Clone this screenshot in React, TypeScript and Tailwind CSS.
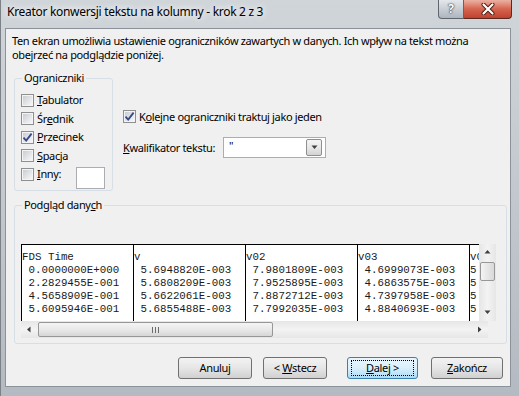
const ui = "font-['Noto_Sans','Liberation_Sans',sans-serif]";

function Check({ on }: { on?: boolean }) {
  return (
    <span className="flex h-[13px] w-[13px] shrink-0 items-center justify-center border border-[#8e8f8f] bg-[#f4f4f4]">
      <span className="flex h-[9px] w-[9px] items-center justify-center overflow-visible bg-linear-to-br from-[#c9cdd3] to-[#f7f7f7]">
        {on && (
          <svg width="11" height="11" viewBox="0 0 11 11" className="shrink-0">
            <path d="M1.5 5.6 L4.2 8.6 L9.6 1.6" fill="none" stroke="#34488a" strokeWidth="1.8" />
          </svg>
        )}
      </span>
    </span>
  );
}

function Tri({ dir }: { dir: "up" | "down" | "left" | "right" }) {
  const d = {
    up: "M0.5 4.5 L3.5 1 L6.5 4.5 Z",
    down: "M0.5 1.5 L3.5 5 L6.5 1.5 Z",
    left: "M4.5 0.5 L1 3.5 L4.5 6.5 Z",
    right: "M2 0.5 L5.5 3.5 L2 6.5 Z",
  }[dir];
  return (
    <svg width="7" height="7" viewBox="0 0 7 7">
      <path d={d} fill="#404040" />
    </svg>
  );
}

function Btn({ children, className, focus }: { children: React.ReactNode; className: string; focus?: boolean }) {
  return (
    <div
      className={
        "flex h-[22px] shrink-0 items-center justify-center rounded-[3px] border " +
        (focus
          ? "border-[#3c7fb1] bg-linear-to-b from-[#eaf6fd] via-[#d9f0fc] to-[#a9dbf6] "
          : "border-[#707070] bg-linear-to-b from-[#f3f3f3] via-[#e6e6e6] to-[#d0d0d0] ") +
        className
      }
    >
      {focus ? (
        <span className="flex h-[16px] w-[calc(100%-6px)] items-center justify-center border border-dotted border-black">
          {children}
        </span>
      ) : (
        children
      )}
    </div>
  );
}

const cols = [
  { head: "FDS Time", rows: [" 0.0000000E+000", " 2.2829455E-001", " 4.5658909E-001", " 5.6095946E-001"] },
  { head: "v", rows: [" 5.6948820E-003", " 5.6808209E-003", " 5.6622061E-003", " 5.6855488E-003"] },
  { head: "v02", rows: [" 7.9801809E-003", " 7.9525895E-003", " 7.8872712E-003", " 7.7992035E-003"] },
  { head: "v03", rows: [" 4.6999073E-003", " 4.6863575E-003", " 4.7397958E-003", " 4.8840693E-003"] },
];

export default function App() {
  return (
    <div className={"flex h-[396px] w-[519px] flex-col overflow-hidden border-l border-[#7c8188] bg-linear-to-b from-[#d0d5da] via-[#c3c8ce] to-[#b4bac1] text-black " + ui}>
      {/* title bar */}
      <div className="flex h-[28px] shrink-0 items-start">
        <div className="pl-[6px] pt-[4px] text-[12px] leading-[16px] tracking-[-0.3px] [text-shadow:0_0_6px_#fff,0_0_10px_#fff]">
          Kreator konwersji tekstu na kolumny - krok 2 z 3
        </div>
        <div className="ml-auto mr-[7px] flex">
          <div className="flex h-[19px] w-[26px] items-center justify-center rounded-bl-[4px] border border-t-0 border-[#5f656c] bg-linear-to-b from-[#e4e8ec] via-[#c9ced4] to-[#aeb5bd] text-[12px] font-bold text-white [text-shadow:0_0_2px_#333,0_0_1px_#000]">
            ?
          </div>
          <div className="flex h-[19px] w-[48px] items-center justify-center rounded-br-[4px] border border-l-0 border-t-0 border-[#5a2a22] bg-linear-to-b from-[#eab1a4] via-[#d5654f] to-[#c0412d]">
            <svg width="14" height="12" viewBox="0 0 14 12">
              <path d="M2.5 1.5 L11.5 10.5 M11.5 1.5 L2.5 10.5" stroke="#4a1a12" strokeWidth="4" strokeLinecap="round" />
              <path d="M2.5 1.5 L11.5 10.5 M11.5 1.5 L2.5 10.5" stroke="#fff" strokeWidth="2.2" strokeLinecap="round" />
            </svg>
          </div>
        </div>
      </div>

      {/* client area */}
      <div className="ml-[4px] flex h-[359px] w-[506px] flex-col border border-[#8b9299] bg-[#f0f0f0] text-[11px] leading-[14px] tracking-[-0.35px]">
        <p className="whitespace-nowrap pl-[6px] pt-[5px]">
          Ten ekran umożliwia ustawienie ograniczników zawartych w danych. Ich wpływ na tekst można
          <br />
          obejrzeć na podglądzie poniżej.
        </p>

        <div className="mt-[9px] flex">
          <fieldset className="ml-[8px] h-[120px] w-[99px] rounded-[3px] border border-[#d5dfe5] pl-[6px] pt-[6px]">
            <legend className="ml-[1px] px-[2px] leading-[14px]">Ograniczniki</legend>
            {[
              [<><u>T</u>abulator</>, false],
              [<>Śr<u>e</u>dnik</>, false],
              [<><u>P</u>rzecinek</>, true],
              [<><u>S</u>pacja</>, false],
            ].map(([label, on], i) => (
              <div key={i} className="flex h-[18.5px] items-center gap-[3px]">
                <Check on={on as boolean} />
                <span>{label as React.ReactNode}</span>
              </div>
            ))}
            <div className="flex h-[18.5px] items-center gap-[3px]">
              <Check />
              <span><u>I</u>nny:</span>
              <div className="ml-[12px] mt-[2px] h-[22px] w-[29px] self-start border border-[#abadb3] bg-white" />
            </div>
          </fieldset>

          <div className="ml-[10px] flex flex-col">
            <div className="mt-[39px] flex h-[13px] items-center gap-[3px]">
              <Check on />
              <span>K<u>o</u>lejne ograniczniki traktuj jako jeden</span>
            </div>
            <div className="mt-[14px] flex items-center">
              <span className="w-[100px]"><u>K</u>walifikator tekstu:</span>
              <div className="flex h-[21px] w-[103px] items-start justify-between border border-[#abadb3] bg-white">
                <span className="pl-[5px] pt-[1px]">"</span>
                <span className="mr-[3px] mt-[1px] flex h-[17px] w-[16px] items-center justify-center rounded-[2px] border border-[#8f8f8f] bg-linear-to-b from-[#f4f4f4] via-[#e8e8e8] to-[#d3d3d3]">
                  <Tri dir="down" />
                </span>
              </div>
            </div>
          </div>
        </div>

        <fieldset className="ml-[8px] mt-[7px] h-[146px] w-[493px] rounded-[3px] border border-[#d5dfe5] pl-[6px] pt-[32px]">
          <legend className="ml-[1px] px-[2px] leading-[14px]">Podgląd dany<u>c</u>h</legend>
          <div className="flex w-[475px] flex-col">
            <div className="flex h-[77px]">
              <div className="flex w-[458px] overflow-hidden border-t border-black bg-white font-['Liberation_Mono',monospace] text-[10.8px] leading-[13px] tracking-normal text-[#1a1a1a]">
                {cols.map((c) => (
                  <div key={c.head} className="w-[112px] shrink-0 whitespace-pre border-l border-black pt-[6px]">
                    <div>{c.head}</div>
                    {c.rows.map((r) => (
                      <div key={r}>{r}</div>
                    ))}
                  </div>
                ))}
                <div className="w-[10px] shrink-0 overflow-hidden whitespace-pre border-l border-black pt-[6px]">
                  <div>v04</div>
                  <div>5</div>
                  <div>5</div>
                  <div>5</div>
                  <div>5</div>
                </div>
              </div>
              <div className="flex w-[17px] flex-col bg-linear-to-r from-[#e6e6e6] via-[#f3f3f3] to-[#e6e6e6]">
                <div className="flex h-[17px] items-center justify-center"><Tri dir="up" /></div>
                <div className="mx-[1px] mt-[1px] h-[19px] rounded-[2px] border border-[#979797] bg-linear-to-r from-[#f4f4f4] to-[#d9d9d9]" />
                <div className="mt-auto flex h-[17px] items-center justify-center"><Tri dir="down" /></div>
              </div>
            </div>
            <div className="flex h-[17px]">
              <div className="flex w-[467px] bg-linear-to-b from-[#e6e6e6] via-[#f3f3f3] to-[#e6e6e6]">
                <div className="flex w-[17px] items-center justify-center"><Tri dir="left" /></div>
                <div className="my-[1px] flex w-[235px] items-center justify-center gap-[2px] rounded-[2px] border border-[#979797] bg-linear-to-b from-[#f4f4f4] via-[#e9e9e9] to-[#d6d6d6]">
                  <span className="h-[6px] w-px bg-[#6b6b6b]" />
                  <span className="h-[6px] w-px bg-[#6b6b6b]" />
                  <span className="h-[6px] w-px bg-[#6b6b6b]" />
                </div>
                <div className="ml-auto flex w-[17px] items-center justify-center"><Tri dir="right" /></div>
              </div>
              <div className="w-[8px] bg-[#f0f0f0]" />
            </div>
          </div>
        </fieldset>

        <div className="ml-[172px] mt-[13px] flex">
          <Btn className="w-[74px]">Anuluj</Btn>
          <Btn className="ml-[11px] w-[64px]">&lt;&nbsp;<u>W</u>stecz</Btn>
          <Btn className="ml-[20px] w-[71px]" focus><u>D</u>alej &gt;</Btn>
          <Btn className="ml-[13px] w-[72px]"><u>Z</u>akończ</Btn>
        </div>
      </div>
    </div>
  );
}
